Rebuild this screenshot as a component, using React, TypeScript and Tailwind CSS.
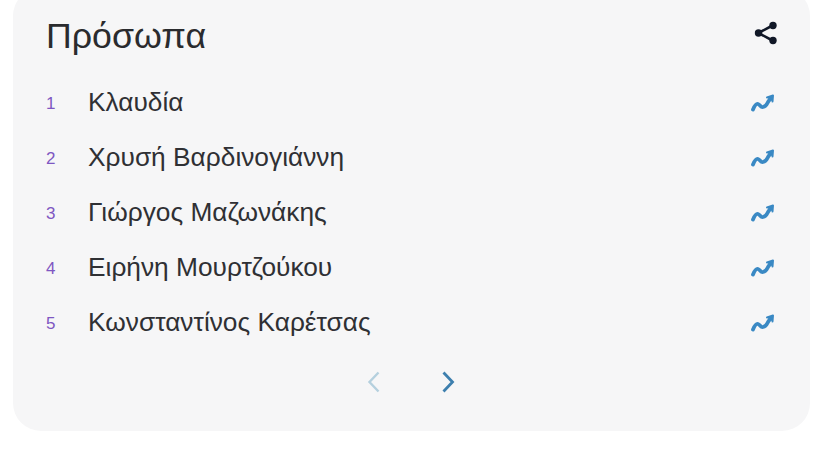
const PEOPLE = ["Κλαυδία", "Χρυσή Βαρδινογιάννη", "Γιώργος Μαζωνάκης", "Ειρήνη Μουρτζούκου", "Κωνσταντίνος Καρέτσας"];

function TrendIcon() {
  return (
    <svg width="26" height="22" viewBox="0 0 26 22" fill="none" stroke="#3a89c4" strokeWidth="3.800" strokeLinecap="round" strokeLinejoin="round">
      <path d="M2 17.500c1.500-3.500 3-6 5-5.500s2.500 3.500 5 3 3.500-2 4.500-4 2-3 3-4.500" />
      <path d="M16 5.500l6-2-.5 6" fill="#3a89c4" strokeWidth="2" />
    </svg>
  );
}

function ShareIcon() {
  return (
    <svg width="28" height="28" viewBox="0 0 28 28" fill="#111827" stroke="#111827">
      <path d="M20.500 6.500 6.500 14l14 7.500" fill="none" strokeWidth="2.600" />
      <circle cx="21" cy="6.500" r="3.700" strokeWidth="0" />
      <circle cx="6.500" cy="14" r="3.700" strokeWidth="0" />
      <circle cx="21" cy="21.500" r="3.700" strokeWidth="0" />
    </svg>
  );
}

export default function App() {
  return (
    <div className="h-[463px] overflow-hidden bg-white pl-[13px] pr-[10px] font-['Liberation_Sans',sans-serif]">
      <section className="-mt-[12px] h-[443px] rounded-[28px] bg-[#f6f6f7] pl-[33px] pr-[33px] pt-[23px]">
        {/* Header */}
        <div className="flex h-[50px] items-center justify-between">
          <h2 className="pt-[2px] text-[35.700px] font-normal text-[#2a2b2e]">Πρόσωπα</h2>
          <span className="-mt-[7px] mr-[-3px]">
            <ShareIcon />
          </span>
        </div>

        {/* List */}
        <ul className="mt-[14px] flex flex-col">
          {PEOPLE.map((name, i) => (
            <li key={name} className="flex h-[55px] items-center">
              <span className="w-[42px] pt-[2px] text-[17px] text-[#7e57c2]">{i + 1}</span>
              <span className="flex-1 text-[26.300px] text-[#2f3034]">{name}</span>
              <TrendIcon />
            </li>
          ))}
        </ul>

        {/* Pager */}
        <div className="mt-[17px] flex items-center justify-center gap-[44px] pr-[1px]">
          <svg width="30" height="30" viewBox="0 0 30 30" fill="none" stroke="#b5d0de" strokeWidth="2.400">
            <path d="M19.500 5.500 10.500 15l9 9.500" />
          </svg>
          <svg width="30" height="30" viewBox="0 0 30 30" fill="none" stroke="#3d7fae" strokeWidth="2.800">
            <path d="M10.500 5.500 19.500 15l-9 9.500" />
          </svg>
        </div>
      </section>
    </div>
  );
}
